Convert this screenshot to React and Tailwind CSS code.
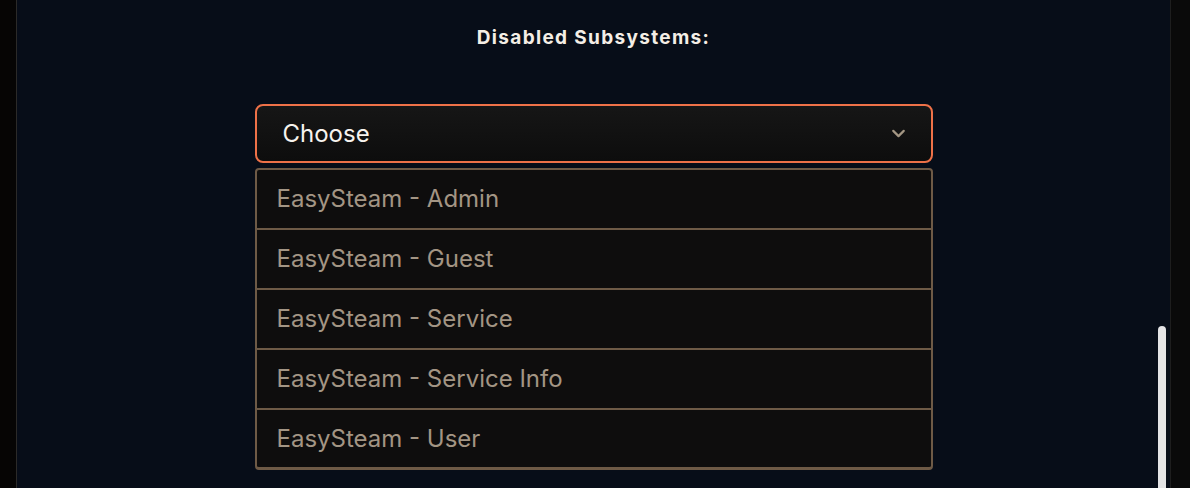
import { ChevronDown } from "lucide-react";

const options = [
  "EasySteam - Admin",
  "EasySteam - Guest",
  "EasySteam - Service",
  "EasySteam - Service Info",
  "EasySteam - User",
];

export default function App() {
  return (
    <div
      className="flex h-[488px] w-full overflow-hidden"
      style={{ fontFamily: "Inter, 'Noto Sans', sans-serif" }}
    >
      <div className="w-[17px] shrink-0 bg-[#060504] border-r border-[#2b2a28]" />

      <main className="relative flex-1 bg-[#070d18] flex flex-col items-center pt-[26px]">
        <h2 className="text-[19px] font-bold tracking-[0.07em] text-[#f4eee6] leading-6">
          Disabled Subsystems:
        </h2>

        <div className="mt-[54px] w-[678px]">
          <button className="w-full h-[59px] flex items-center justify-between pl-[26px] pr-[22px] rounded-[8px] border-2 border-[#ee7148] bg-gradient-to-b from-[#161616] to-[#0d0d0d] text-[24px] text-[#f7f3ee]">
            <span>Choose</span>
            <ChevronDown className="w-[21px] h-[21px] text-[#a39683]" strokeWidth={2.5} />
          </button>

          <ul className="mt-[5px] rounded-[4px] border-2 border-b-[3px] border-[#6e5a46] bg-[#0e0d0d] overflow-hidden">
            {options.map((o, i) => (
              <li
                key={o}
                className={
                  "flex items-center pl-[20px] text-[24px] text-[#a39584] " +
                  (i === 0
                    ? "h-[58px]"
                    : i === options.length - 1
                    ? "h-[59px] border-t-2 border-[#6e5a46]"
                    : "h-[60px] border-t-2 border-[#6e5a46]")
                }
              >
                {o}
              </li>
            ))}
          </ul>
        </div>

        <div className="absolute right-[4px] top-[326px] bottom-0 w-[8px] rounded-t-full bg-[#e4e4e6]" />
      </main>

      <div className="w-[20px] shrink-0 bg-[#0a0a0a] border-l border-[#1e1e1e]" />
    </div>
  );
}
